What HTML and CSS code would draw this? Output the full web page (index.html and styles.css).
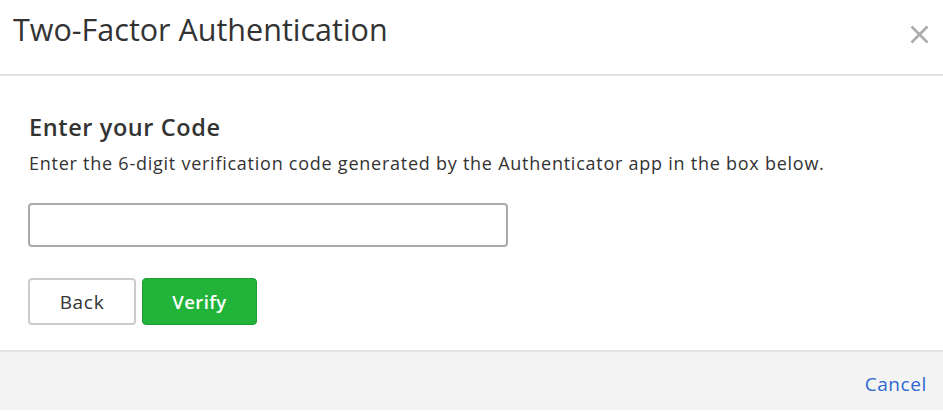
FILE: index.html
```html
<!DOCTYPE html>
<html lang="en">
<head>
  <meta charset="UTF-8" />
  <meta name="viewport" content="width=device-width, initial-scale=1.0" />
  <title>Two-Factor Authentication</title>
  <link rel="stylesheet" href="styles.css">
</head>
<body>
  <div class="modal">
    <div class="modal-header">
      <h1>Two-Factor Authentication</h1>
      <button class="close" aria-label="Close">
        <svg width="19" height="19" viewBox="0 0 19 19"><path d="M1.5 1.5 L17.5 17.5 M17.5 1.5 L1.5 17.5" stroke="#ababab" stroke-width="2.6" /></svg>
      </button>
    </div>

    <div class="modal-body">
      <h3>Enter your Code</h3>
      <p>Enter the 6-digit verification code generated by the Authenticator app in the box below.</p>
      <input type="text" class="code-input" />
      <div class="actions">
        <button class="btn btn-back">Back</button>
        <button class="btn btn-verify">Verify</button>
      </div>
    </div>

    <div class="modal-footer">
      <a href="#" class="cancel">Cancel</a>
    </div>
  </div>
</body>
</html>
```

FILE: styles.css
```css
body { margin: 0; font-family: "Open Sans", "Liberation Sans", sans-serif; color: #333; background: #fff; }
.modal { width: 943px; display: flex; flex-direction: column; }
.modal-header { height: 76px; border-bottom: 2px solid #e2e2e2; display: flex; align-items: flex-start; justify-content: space-between; padding: 11px 14px 0 13px; box-sizing: border-box; }
.modal-header h1 { margin: 0; font-size: 30.5px; line-height: 36px; font-weight: 400; color: #333; }
.close { background: none; border: 0; padding: 0; margin-top: 14px; cursor: pointer; line-height: 0; }
.modal-body { padding: 37px 28px 25px; }
.modal-body h3 { margin: 0 0 10px 1px; font-size: 23.5px; line-height: 28px; font-weight: 600; letter-spacing: 0.6px; }
.modal-body p { margin: 0 0 28px 1px; font-size: 18px; line-height: 24px; letter-spacing: 0.75px; }
.code-input { display: block; width: 480px; height: 44px; box-sizing: border-box; border: 2px solid #aaa; border-radius: 4px; margin: 0 0 31px; }
.actions { display: flex; gap: 6px; }
.btn { height: 47px; border-radius: 4px; font-family: inherit; font-size: 19px; cursor: pointer; padding: 0; letter-spacing: 0.7px; }
.btn-back { width: 108px; background: #fff; border: 2px solid #ccc; color: #333; }
.btn-verify { width: 115px; background: #22b33b; border: 1px solid #1c9c33; color: #fff; font-size: 18.5px; font-weight: 600; letter-spacing: 0.4px; }
.modal-footer { height: 60px; background: #f4f4f4; border-top: 2px solid #e2e2e2; display: flex; justify-content: flex-end; padding: 20px 16px 0 0; box-sizing: border-box; }
.cancel { color: #2d68cf; text-decoration: none; font-size: 19px; line-height: 24px; letter-spacing: 0.6px; }
```
